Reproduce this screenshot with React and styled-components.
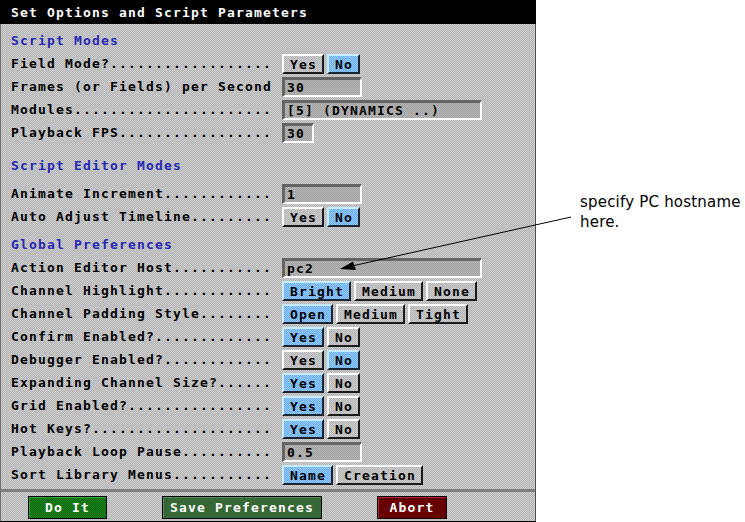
import React from "react";
import styled, { createGlobalStyle } from "styled-components";

const GlobalStyle = createGlobalStyle`
  body {
    margin: 0;
    background: #ffffff;
  }
`;

const dither = (a, b) =>
  `repeating-conic-gradient(${a} 0 25%, ${b} 0 50%) 0 0 / 2px 2px`;

const Page = styled.div`
  position: relative;
  display: flex;
  width: 745px;
  height: 522px;
  overflow: hidden;
`;

const Panel = styled.div`
  box-sizing: border-box;
  display: flex;
  flex-direction: column;
  width: 536px;
  height: 522px;
  border-left: 1px solid #707070;
  border-right: 1px solid #505050;
  border-bottom: 1px solid #000;
  background: ${dither("#cdcdd8", "#b4b4ac")};
  font-family: "DejaVu Sans Mono", "Liberation Mono", monospace;
  font-weight: bold;
  font-size: 13px;
  letter-spacing: 1.17px;
`;

const TitleBar = styled.div`
  height: 24px;
  line-height: 26px;
  margin: 0 -1px;
  padding-left: 11px;
  background: #000;
  color: #fff;
`;

const Body = styled.div`
  flex: 1;
  display: flex;
  flex-direction: column;
  gap: 3px;
  padding: 6px 0 0 10px;
`;

const SectionTitle = styled.div`
  height: 20px;
  line-height: 21px;
  color: #2828b4;
  margin-top: ${(p) => p.$top || 0}px;
  margin-bottom: ${(p) => p.$bottom || 0}px;
`;

const Row = styled.div`
  display: grid;
  grid-template-columns: 271px auto;
  align-items: center;
  height: 20px;
  color: #000;
`;

const Label = styled.span`
  white-space: pre;
  line-height: 21px;
`;

const Choices = styled.div`
  display: flex;
  gap: 3px;
`;

const Choice = styled.div`
  box-sizing: border-box;
  height: 20px;
  line-height: 17px;
  padding: 0 5px 0 6px;
  border: 2px solid;
  border-color: ${(p) =>
    p.$on ? "#c8ecff #1c2430 #1c2430 #c8ecff" : "#ffffff #1a1a1a #1a1a1a #ffffff"};
  background: ${(p) =>
    p.$on ? dither("#92ccff", "#6eacf2") : dither("#cdcdd8", "#b4b4ac")};
  color: #000;
  white-space: pre;
`;

const Field = styled.div`
  box-sizing: border-box;
  height: 20px;
  line-height: 16px;
  padding-left: 2px;
  border-style: solid;
  border-width: 3px 2px 2px 3px;
  border-color: #646464 #ffffff #ffffff #646464;
  background: ${dither("#b6b6b6", "#a2a2a2")};
  white-space: pre;
  overflow: hidden;
`;

const Footer = styled.div`
  display: flex;
  gap: 55px;
  height: 25px;
  padding: 4px 0 0 27px;
  border-top: 3px solid #7e7e7e;
`;

const FOOTER_COLORS = {
  go: ["#0c6e0c", "#1a7c1a", "#3aa03a"],
  save: ["#2f6c2f", "#3d633d", "#5a8a5a"],
  stop: ["#700000", "#5c0000", "#a03030"],
};

const FooterButton = styled.div`
  box-sizing: border-box;
  width: ${(p) => p.$w}px;
  height: 23px;
  line-height: 22px;
  text-align: center;
  border: 1px solid #000;
  box-shadow: inset 1px 1px 0 ${(p) => FOOTER_COLORS[p.$kind][2]};
  background: ${(p) =>
    dither(FOOTER_COLORS[p.$kind][0], FOOTER_COLORS[p.$kind][1])};
  color: #fff;
  white-space: pre;
`;

const Side = styled.div`
  padding: 192px 0 0 44px;
  font-family: "DejaVu Sans", "Liberation Sans", sans-serif;
  font-size: 15px;
  line-height: 20px;
  letter-spacing: 0.2px;
  color: #000;
  white-space: nowrap;
`;

const Overlay = styled.svg`
  position: absolute;
  left: 0;
  top: 0;
  pointer-events: none;
`;

const sections = [
  {
    title: "Script Modes",
    rows: [
      { label: "Field Mode?", options: ["Yes", "No"], on: 1 },
      { label: "Frames (or Fields) per Second", value: "30", width: 80 },
      { label: "Modules", value: "[5] (DYNAMICS ..)", width: 200 },
      { label: "Playback FPS", value: "30", width: 32 },
    ],
  },
  {
    title: "Script Editor Modes",
    top: 10,
    bottom: 5,
    rows: [
      { label: "Animate Increment", value: "1", width: 80 },
      { label: "Auto Adjust Timeline", options: ["Yes", "No"], on: 1 },
    ],
  },
  {
    title: "Global Preferences",
    top: 5,
    rows: [
      { label: "Action Editor Host", value: "pc2", width: 200 },
      { label: "Channel Highlight", options: ["Bright", "Medium", "None"], on: 0 },
      { label: "Channel Padding Style", options: ["Open", "Medium", "Tight"], on: 0 },
      { label: "Confirm Enabled?", options: ["Yes", "No"], on: 0 },
      { label: "Debugger Enabled?", options: ["Yes", "No"], on: 1 },
      { label: "Expanding Channel Size?", options: ["Yes", "No"], on: 0 },
      { label: "Grid Enabled?", options: ["Yes", "No"], on: 0 },
      { label: "Hot Keys?", options: ["Yes", "No"], on: 0 },
      { label: "Playback Loop Pause", value: "0.5", width: 80 },
      { label: "Sort Library Menus", options: ["Name", "Creation"], on: 0 },
    ],
  },
];

const OptionRow = ({ label, options, on, value, width }) => (
  <Row>
    <Label>{label.padEnd(29, ".")}</Label>
    {options ? (
      <Choices>
        {options.map((o, i) => (
          <Choice key={o} $on={i === on}>
            {o}
          </Choice>
        ))}
      </Choices>
    ) : (
      <Field style={{ width }}>{value}</Field>
    )}
  </Row>
);

export default function App() {
  return (
    <Page>
      <GlobalStyle />
      <Panel>
        <TitleBar>Set Options and Script Parameters</TitleBar>
        <Body>
          {sections.map((s) => (
            <React.Fragment key={s.title}>
              <SectionTitle $top={s.top} $bottom={s.bottom}>
                {s.title}
              </SectionTitle>
              {s.rows.map((r) => (
                <OptionRow key={r.label} {...r} />
              ))}
            </React.Fragment>
          ))}
        </Body>
        <Footer>
          <FooterButton $kind="go" $w={79}>
            Do It
          </FooterButton>
          <FooterButton $kind="save" $w={160}>
            Save Preferences
          </FooterButton>
          <FooterButton $kind="stop" $w={70}>
            Abort
          </FooterButton>
        </Footer>
      </Panel>
      <Side>
        specify PC hostname
        <br />
        here.
      </Side>
      <Overlay width="745" height="522" viewBox="0 0 745 522">
        <line x1="571" y1="217" x2="352" y2="266" stroke="#000" strokeWidth="1" />
        <polygon points="340,269 353,261.5 356,270" fill="#000" />
      </Overlay>
    </Page>
  );
}
